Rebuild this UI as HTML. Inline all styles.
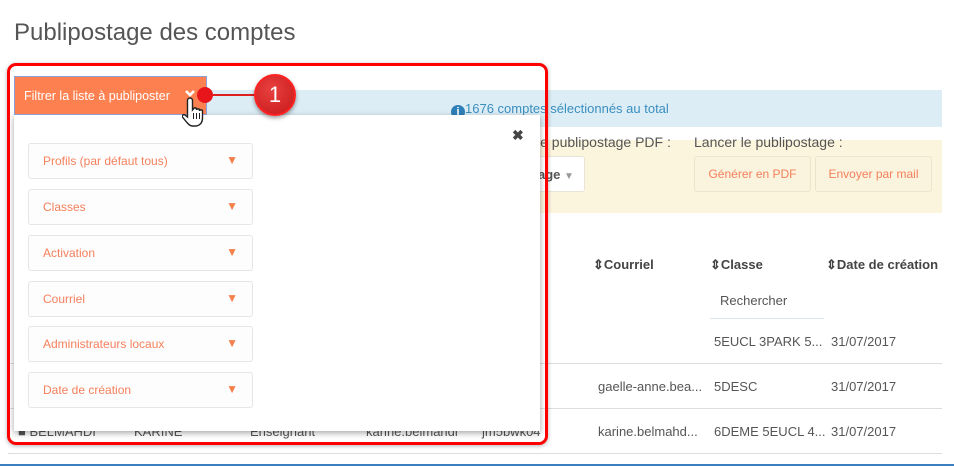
<!DOCTYPE html>
<html><head><meta charset="utf-8"><style>
*{box-sizing:border-box;margin:0;padding:0}
body{width:954px;height:466px;overflow:hidden;background:#fff;font-family:"Liberation Sans",sans-serif;position:relative;color:#555}
.a{position:absolute;white-space:nowrap}
.t{font-size:13px;color:#555}
.f{position:absolute;left:28px;width:225px;height:36px;border:1px solid #e6e6e6;border-radius:3px;background:#fdfdfd;font-size:12px;color:#f5805c;padding:10px 14px}
.f span{position:absolute;right:14px;top:9px;font-size:12px;color:#f5804c}
.line{position:absolute;left:8px;width:934px;height:1px;background:#ddd}
.h{font-size:13px;color:#444;font-weight:bold}
</style></head><body>
<div class="a" style="left:14px;top:19px;font-size:24px;color:#555">Publipostage des comptes</div>

<div class="a" style="left:207px;top:90px;width:735px;height:37px;background:#dcedf5"></div>
<div class="a" style="left:451px;top:101px;font-size:13px;color:#3a8fc0"><span style="display:inline-block;width:14px;height:14px;border-radius:50%;background:#2f7fb8;color:#fff;font-size:11px;text-align:center;line-height:14px;font-weight:bold;vertical-align:-2px">i</span>1676 comptes sélectionnés au total</div>

<div class="a" style="left:535px;top:140px;width:407px;height:73px;background:#fcf5dd"></div>
<div class="a t" style="left:537px;top:134px;font-size:14px">le publipostage PDF :</div>
<div class="a t" style="left:694px;top:134px;font-size:14px">Lancer le publipostage :</div>
<div class="a" style="left:515px;top:156px;width:70px;height:36px;background:#fff;border:1px solid #e8e4d8;border-radius:3px;font-size:13px;color:#555;padding:10px 8px 0 22px;font-weight:bold">age <span style="color:#999;font-size:10px">▼</span></div>
<div class="a" style="left:694px;top:156px;width:117px;height:36px;background:#faf3de;border:1px solid #ece4cc;border-radius:3px;font-size:12px;color:#f5805c;text-align:center;line-height:34px">Générer en PDF</div>
<div class="a" style="left:815px;top:156px;width:117px;height:36px;background:#faf3de;border:1px solid #ece4cc;border-radius:3px;font-size:12px;color:#f5805c;text-align:center;line-height:34px">Envoyer par mail</div>

<div class="a h" style="left:593px;top:257px">⇕Courriel</div>
<div class="a h" style="left:710px;top:257px">⇕Classe</div>
<div class="a h" style="left:826px;top:257px">⇕Date de création</div>
<div class="a t" style="left:720px;top:293px">Rechercher</div>
<div class="a" style="left:710px;top:318px;width:114px;height:1px;background:#e0e6ee"></div>
<div class="a t" style="left:714px;top:334px">5EUCL 3PARK 5...</div>
<div class="a t" style="left:831px;top:334px">31/07/2017</div>
<div class="line" style="top:363px"></div>
<div class="a t" style="left:598px;top:379px">gaelle-anne.bea...</div>
<div class="a t" style="left:714px;top:379px">5DESC</div>
<div class="a t" style="left:831px;top:379px">31/07/2017</div>
<div class="line" style="top:408px"></div>
<div class="a t" style="left:18px;top:424px">■ BELMAHDI</div>
<div class="a t" style="left:134px;top:424px">KARINE</div>
<div class="a t" style="left:250px;top:424px">Enseignant</div>
<div class="a t" style="left:366px;top:424px">karine.belmahdi</div>
<div class="a t" style="left:482px;top:424px">jm5bwk04</div>
<div class="a t" style="left:598px;top:424px">karine.belmahd...</div>
<div class="a t" style="left:714px;top:424px">6DEME 5EUCL 4...</div>
<div class="a t" style="left:831px;top:424px">31/07/2017</div>
<div class="line" style="top:453px"></div>
<div class="a" style="left:0;top:464px;width:954px;height:2px;background:#3b7fc0"></div>

<div class="a" style="left:14px;top:115px;width:526px;height:316px;background:#fff;box-shadow:0 2px 6px rgba(0,0,0,.35)"></div>
<div class="a" style="left:512px;top:127px;font-size:14px;color:#444;font-weight:bold">✖</div>
<div class="f" style="top:143px">Profils (par défaut tous)<span>▼</span></div>
<div class="f" style="top:189px">Classes<span>▼</span></div>
<div class="f" style="top:235px">Activation<span>▼</span></div>
<div class="f" style="top:281px">Courriel<span>▼</span></div>
<div class="f" style="top:326px">Administrateurs locaux<span>▼</span></div>
<div class="f" style="top:372px">Date de création<span>▼</span></div>

<div class="a" style="left:14px;top:76px;width:193px;height:39px;background:#fd8150;border:1px solid #8a9fd6;color:#fff;font-size:12.5px;padding:12px 9px">Filtrer la liste à publiposter</div>
<svg class="a" style="left:184px;top:89px" width="12" height="10" viewBox="0 0 12 10"><path d="M2 2l4 4 4-4" fill="none" stroke="#fff" stroke-width="2.6"/></svg>

<div class="a" style="left:7px;top:63px;width:541px;height:382px;border:3px solid #f00;border-radius:9px;box-shadow:0 1px 4px rgba(0,0,0,.3)"></div>

<div class="a" style="left:207px;top:94px;width:50px;height:2px;background:#e02020"></div>
<div class="a" style="left:197px;top:87px;width:16px;height:16px;border-radius:50%;background:#e8161b"></div>
<div class="a" style="left:254px;top:74px;width:42px;height:42px;border-radius:50%;background:radial-gradient(circle at 40% 35%,#e84040,#c81818);border:2px solid #f22;box-shadow:0 2px 4px rgba(0,0,0,.4);color:#fff;font-size:22px;text-align:center;line-height:38px">1</div>
<svg class="a" style="left:182px;top:96px" width="30" height="34" viewBox="0 0 30 34"><path d="M8 2c1.5 0 2.5 1 2.5 2.5V14l1-1c0-1.5 3-1.5 3 0v1c0-1.5 3-1.5 3 0v1c0-1.5 3-1.5 3 0v7c0 4-2 7-6 8h-4c-3 0-4-2-6-4l-4-5c-1-1.5 1-3 2.5-2l2.5 2V4.5C5.5 3 6.5 2 8 2z" fill="#fff" stroke="#222" stroke-width="1.4"/><path d="M11.5 17v6M14.5 17v6M17.5 17v6" stroke="#222" stroke-width="1"/></svg>
</body></html>
